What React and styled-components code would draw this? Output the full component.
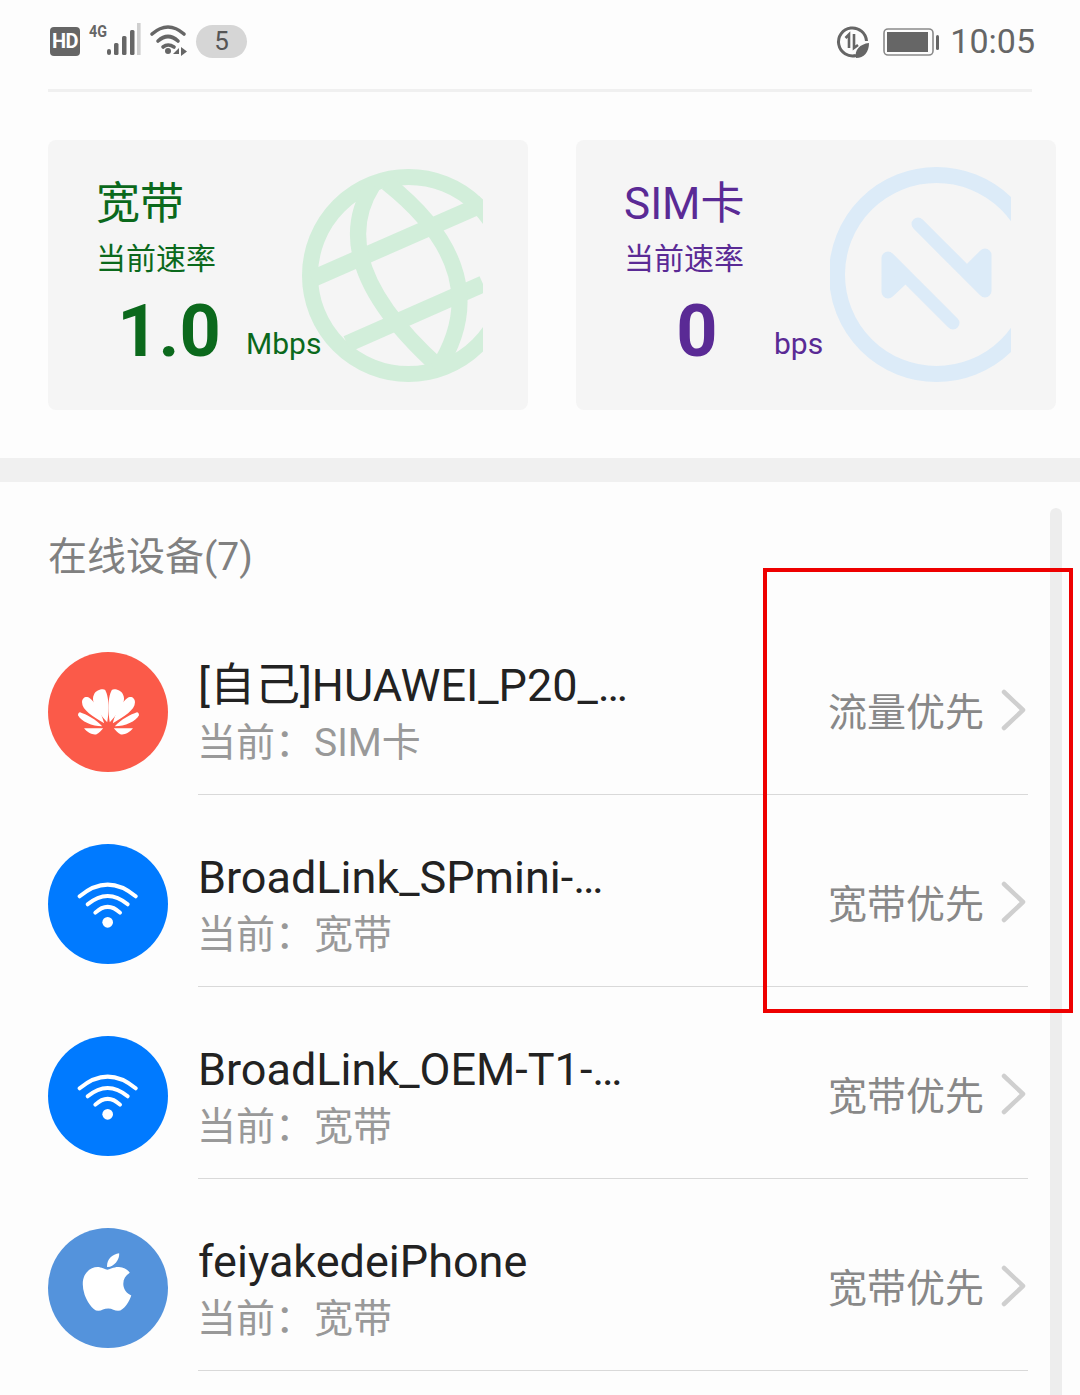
import React from "react";
import styled, { createGlobalStyle } from "styled-components";
import { FaApple } from "react-icons/fa";

const Global = createGlobalStyle`
  html, body { margin: 0; padding: 0; background: #fdfdfd; }
  body { font-family: Roboto, "Noto Sans CJK SC", sans-serif; overflow: hidden; }
`;

const Page = styled.div`
  position: relative;
  width: 1080px;
  height: 1395px;
  overflow: hidden;
  background: #fdfdfd;
`;

const StatusBar = styled.header`
  display: flex;
  align-items: center;
  justify-content: space-between;
  height: 92px;
  margin: 0 48px;
  padding: 0 0 6px;
  box-sizing: border-box;
  border-bottom: 3px solid #f0f0f0;
`;
const StatusGroup = styled.div`
  display: flex;
  align-items: center;
`;
const HdBadge = styled.span`
  width: 30px;
  height: 29px;
  margin: -1px 0 0 2px;
  border-radius: 4px;
  background: #666;
  color: #fff;
  font: 700 20px/29px "Roboto", sans-serif;
  letter-spacing: -0.5px;
  text-align: center;
`;
const CountPill = styled.span`
  width: 51px;
  height: 33px;
  margin-left: 8px;
  border-radius: 17px;
  background: #d6d6d6;
  color: #555;
  font-size: 26px;
  line-height: 33px;
  text-align: center;
`;
const Clock = styled.span`
  margin: -2px -3px 0 11px;
  color: #666;
  font-size: 34px;
  line-height: 40px;
`;
const StatusGlyph = styled.svg`
  margin: -4px 0 0 9px;
  overflow: visible;
`;

const Cards = styled.section`
  display: grid;
  grid-template-columns: 480px 480px;
  gap: 48px;
  padding: 48px 24px 48px 48px;
  border-bottom: 24px solid #f0f0f0;
`;
const Card = styled.article`
  position: relative;
  height: 270px;
  padding: 34px 0 0 48px;
  box-sizing: border-box;
  border-radius: 8px;
  background: #f5f5f5;
  color: ${(p) => p.$color};
  overflow: hidden;
`;
const CardArt = styled.svg`
  position: absolute;
  left: ${(p) => p.$left}px;
  top: ${(p) => p.$top}px;
`;
const CardTitle = styled.div`
  position: relative;
  font-size: 44px;
  line-height: 60px;
`;
const CardCaption = styled.div`
  position: relative;
  margin-top: 4px;
  font-size: 30px;
  line-height: 42px;
`;
const Rate = styled.div`
  position: relative;
  display: grid;
  grid-template-columns: 146px auto;
  column-gap: 4px;
  margin-top: 10px;
  align-items: start;
`;
const RateValue = styled.span`
  font-size: 72px;
  line-height: 84px;
  font-weight: 700;
  text-align: center;
`;
const RateUnit = styled.span`
  margin-top: 36px;
  font-size: 30px;
`;

const DeviceSection = styled.section`
  padding: 48px 0 0 48px;
`;
const SectionTitle = styled.h2`
  margin: 0;
  color: #808080;
  font-size: 39px;
  line-height: 54px;
  font-weight: 400;
`;
const Row = styled.div`
  display: flex;
  width: 980px;
  height: 192px;
  &:first-of-type { margin-top: 19px; }
`;
const Avatar = styled.div`
  flex: none;
  display: flex;
  align-items: center;
  justify-content: center;
  width: 120px;
  height: 120px;
  margin-top: 49px;
  border-radius: 50%;
  background: ${(p) => p.$bg};
  color: #fff;
`;
const RowBody = styled.div`
  flex: 1;
  display: flex;
  align-items: center;
  justify-content: space-between;
  margin-left: 30px;
  padding: 49px 2px 23px 0;
  box-sizing: border-box;
  border-bottom: 1px solid #d9d9d9;
`;
const Info = styled.div`
  display: flex;
  flex-direction: column;
  margin-top: 6px;
`;
const DeviceName = styled.div`
  color: #222;
  font-size: 45px;
  line-height: 56px;
`;
const DeviceMode = styled.div`
  color: #999;
  font-size: 39px;
  line-height: 58px;
  margin-left: -1px;
`;
const Priority = styled.div`
  display: flex;
  align-items: center;
  gap: 17px;
  margin-top: -6px;
  color: #888;
  font-size: 39px;
`;
const ChevronIcon = styled.svg`
  margin-top: 2px;
`;
const AppleGlyph = styled(FaApple)`
  margin: -12px 3px 0 0;
`;
const Scrollbar = styled.div`
  position: absolute;
  left: 1050px;
  top: 508px;
  bottom: -10px;
  width: 12px;
  border-radius: 6px;
  background: #ededed;
`;
const Highlight = styled.div`
  position: absolute;
  left: 763px;
  top: 568px;
  width: 310px;
  height: 445px;
  box-sizing: border-box;
  border: 4px solid #ee0000;
`;

const Chevron = () => (
  <ChevronIcon width="25" height="42" viewBox="0 0 25 42" fill="none">
    <path d="M3 3 L22 21 L3 39" stroke="#cfcfcf" strokeWidth="4.5" strokeLinecap="round" strokeLinejoin="round" />
  </ChevronIcon>
);

const petals = (
  <>
    <path d="M29 33C19 22 12 12 16 5C18 1 25-1 27 1C31 8 31 22 29 33Z" />
    <path d="M26 34C15 27 4 21 4 13C4 9 7 7 10 8C14 9 23 21 26 34Z" />
    <path d="M24 37C14 37 3 32 0 26C0 24 1 23 2 23C8 25 18 30 24 37Z" />
    <path d="M25 39L6 39C9 43 15 46 18 45C21 44 23 41 25 39Z" />
  </>
);

const HuaweiLogo = () => (
  <svg width="61" height="46" viewBox="0 0 60.6 45.5" fill="#fff">
    <g>{petals}</g>
    <g transform="translate(60.6 0) scale(-1 1)">{petals}</g>
  </svg>
);

const WifiLogo = () => (
  <svg width="64" height="50" viewBox="110 130 190 150" fill="none" stroke="#fff" strokeWidth="12" strokeLinecap="round">
    <path d="M120 182Q204 112 288 182" />
    <path d="M144 206Q204 156 264 206" />
    <path d="M167 231Q204 196 241 231" />
    <circle cx="204" cy="260" r="16" fill="#fff" stroke="none" />
  </svg>
);

const SignalIcon = () => (
  <StatusGlyph width="52" height="34" viewBox="0 0 52 34" fill="#666">
    <text x="0" y="14" fontFamily="Roboto" fontSize="17" fontWeight="700" textLength="18" lengthAdjust="spacingAndGlyphs">4G</text>
    <rect x="18" y="26" width="4" height="6" rx="2" />
    <rect x="25" y="20" width="4.5" height="12" rx="1.5" />
    <rect x="33" y="13" width="4.5" height="19" rx="1.5" />
    <rect x="41" y="7" width="4.5" height="25" rx="1.5" />
    <rect x="48" y="0" width="3.6" height="32" fill="#cfcfcf" />
  </StatusGlyph>
);

const WifiStatus = () => (
  <StatusGlyph width="38" height="34" viewBox="0 0 38 34" fill="none" stroke="#666" strokeWidth="3.6" strokeLinecap="round">
    <path d="M2 11Q18-3 34 11" />
    <path d="M8 18Q18 9 28 18" />
    <path d="M13 24Q18 20 24 24" />
    <circle cx="18" cy="28" r="3" fill="#666" stroke="none" />
    <path d="M23 31L29 25V31Z" fill="#666" stroke="none" />
    <path d="M31 24V33L37 28.5Z" fill="#666" stroke="none" />
  </StatusGlyph>
);

const SaverIcon = () => (
  <svg width="34" height="34" viewBox="0 0 34 34" fill="none" stroke="#666" strokeWidth="3">
    <path d="M20 30.5A14 14 0 1 1 30.5 16" />
    <path d="M9.5 13L13 9.5V23" strokeWidth="2.6" />
    <path d="M18 9V23L22 20" strokeWidth="2.6" />
    <path d="M20 33C18 25 24 19 33 18C33 27 28 33 20 33Z" fill="#666" stroke="none" />
  </svg>
);

const BatteryIcon = () => (
  <svg width="56" height="28" viewBox="0 0 56 28" style={{ marginLeft: 13 }}>
    <rect x="1" y="1" width="49" height="26" rx="4" fill="none" stroke="#8a8a8a" strokeWidth="1.6" />
    <rect x="4" y="4" width="41" height="20" fill="#666" />
    <rect x="53" y="7" width="3" height="15" rx="1.5" fill="#666" />
  </svg>
);

const GlobeArt = () => (
  <CardArt $left={254} $top={29} width="181" height="213" viewBox="0 0 181 213" fill="none" stroke="#d2eeda" strokeWidth="16">
    <circle cx="106.5" cy="106.5" r="98.5" />
    <path d="M10 110L181 35" strokeWidth="17" />
    <path d="M45 175L181 115" strokeWidth="17" />
    <path d="M71 16Q21 94 138 199" />
    <path d="M85 14Q198 104 135 201" />
  </CardArt>
);

const TransferArt = () => (
  <CardArt $left={254} $top={27} width="181" height="215" viewBox="0 0 181 215" fill="none" stroke="#dcebf8" strokeWidth="16">
    <circle cx="106.5" cy="107.5" r="99.5" />
    <path d="M88 57L155 124V88L140 103" fill="#dcebf8" strokeWidth="13" strokeLinecap="round" strokeLinejoin="round" />
    <path d="M123 156L58 91V125L73 111" fill="#dcebf8" strokeWidth="13" strokeLinecap="round" strokeLinejoin="round" />
  </CardArt>
);

const devices = [
  { name: "[自己]HUAWEI_P20_…", mode: "当前：SIM卡", priority: "流量优先", bg: "#fb5a49", icon: <HuaweiLogo /> },
  { name: "BroadLink_SPmini-…", mode: "当前：宽带", priority: "宽带优先", bg: "#007aff", icon: <WifiLogo /> },
  { name: "BroadLink_OEM-T1-…", mode: "当前：宽带", priority: "宽带优先", bg: "#007aff", icon: <WifiLogo /> },
  { name: "feiyakedeiPhone", mode: "当前：宽带", priority: "宽带优先", bg: "#5493dc", icon: <AppleGlyph size={66} /> },
];

export default function App() {
  return (
    <Page>
      <Global />
      <StatusBar>
        <StatusGroup>
          <HdBadge>HD</HdBadge>
          <SignalIcon />
          <WifiStatus />
          <CountPill>5</CountPill>
        </StatusGroup>
        <StatusGroup>
          <SaverIcon />
          <BatteryIcon />
          <Clock>10:05</Clock>
        </StatusGroup>
      </StatusBar>
      <Cards>
        <Card $color="#0b691c">
          <GlobeArt />
          <CardTitle>宽带</CardTitle>
          <CardCaption>当前速率</CardCaption>
          <Rate>
            <RateValue>1.0</RateValue>
            <RateUnit>Mbps</RateUnit>
          </Rate>
        </Card>
        <Card $color="#5a2a95">
          <TransferArt />
          <CardTitle>SIM卡</CardTitle>
          <CardCaption>当前速率</CardCaption>
          <Rate>
            <RateValue>0</RateValue>
            <RateUnit>bps</RateUnit>
          </Rate>
        </Card>
      </Cards>
      <DeviceSection>
        <SectionTitle>在线设备(7)</SectionTitle>
        {devices.map((d) => (
          <Row key={d.name}>
            <Avatar $bg={d.bg}>{d.icon}</Avatar>
            <RowBody>
              <Info>
                <DeviceName>{d.name}</DeviceName>
                <DeviceMode>{d.mode}</DeviceMode>
              </Info>
              <Priority>
                {d.priority}
                <Chevron />
              </Priority>
            </RowBody>
          </Row>
        ))}
      </DeviceSection>
      <Scrollbar />
      <Highlight />
    </Page>
  );
}
